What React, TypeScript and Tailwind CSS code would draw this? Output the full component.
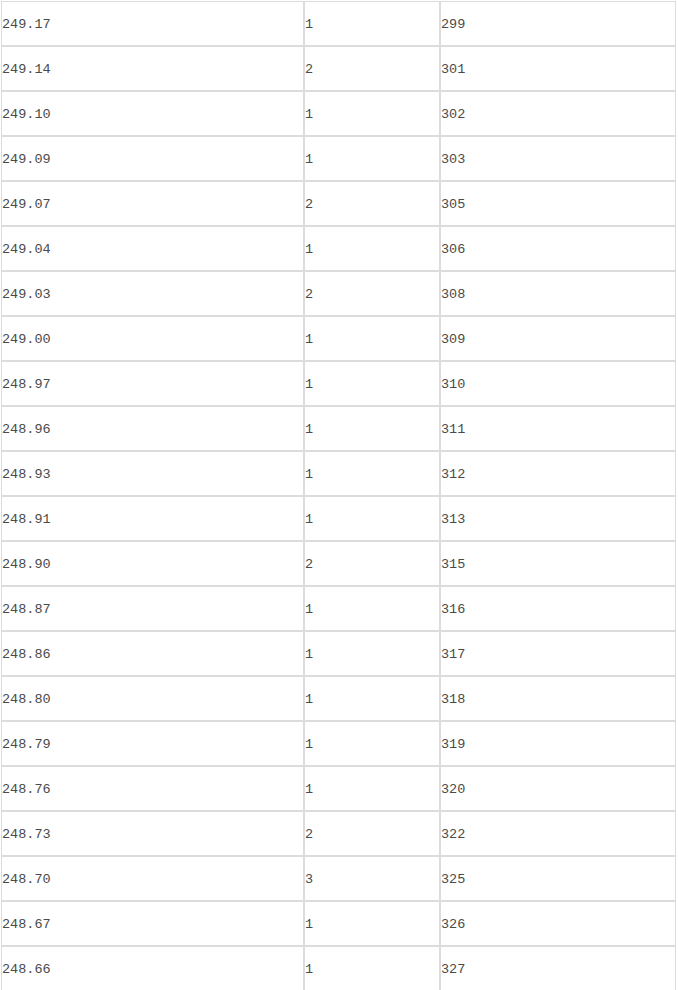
import React from 'react';

const rows: [string, string, string][] = [
  ['249.17', '1', '299'],
  ['249.14', '2', '301'],
  ['249.10', '1', '302'],
  ['249.09', '1', '303'],
  ['249.07', '2', '305'],
  ['249.04', '1', '306'],
  ['249.03', '2', '308'],
  ['249.00', '1', '309'],
  ['248.97', '1', '310'],
  ['248.96', '1', '311'],
  ['248.93', '1', '312'],
  ['248.91', '1', '313'],
  ['248.90', '2', '315'],
  ['248.87', '1', '316'],
  ['248.86', '1', '317'],
  ['248.80', '1', '318'],
  ['248.79', '1', '319'],
  ['248.76', '1', '320'],
  ['248.73', '2', '322'],
  ['248.70', '3', '325'],
  ['248.67', '1', '326'],
  ['248.66', '1', '327'],
];

const cell = 'h-[45px] border border-[#dcdcdc] px-0 pt-[4px] pb-0 align-middle';

export default function App() {
  return (
    <div className="min-h-screen bg-white pl-px pt-px">
      <table
        className="table-fixed border-separate border-spacing-0 w-[675px] text-[13.5px] text-[#4a4a4a]"
        style={{ fontFamily: '"Liberation Mono", "Noto Sans CJK SC", monospace' }}
      >
        <colgroup>
          <col className="w-[303px]" />
          <col className="w-[136px]" />
          <col className="w-[236px]" />
        </colgroup>
        <tbody>
          {rows.map(([price, qty, total]) => (
            <tr key={price}>
              <td className={cell}>{price}</td>
              <td className={cell}>{qty}</td>
              <td className={cell}>{total}</td>
            </tr>
          ))}
        </tbody>
      </table>
    </div>
  );
}
